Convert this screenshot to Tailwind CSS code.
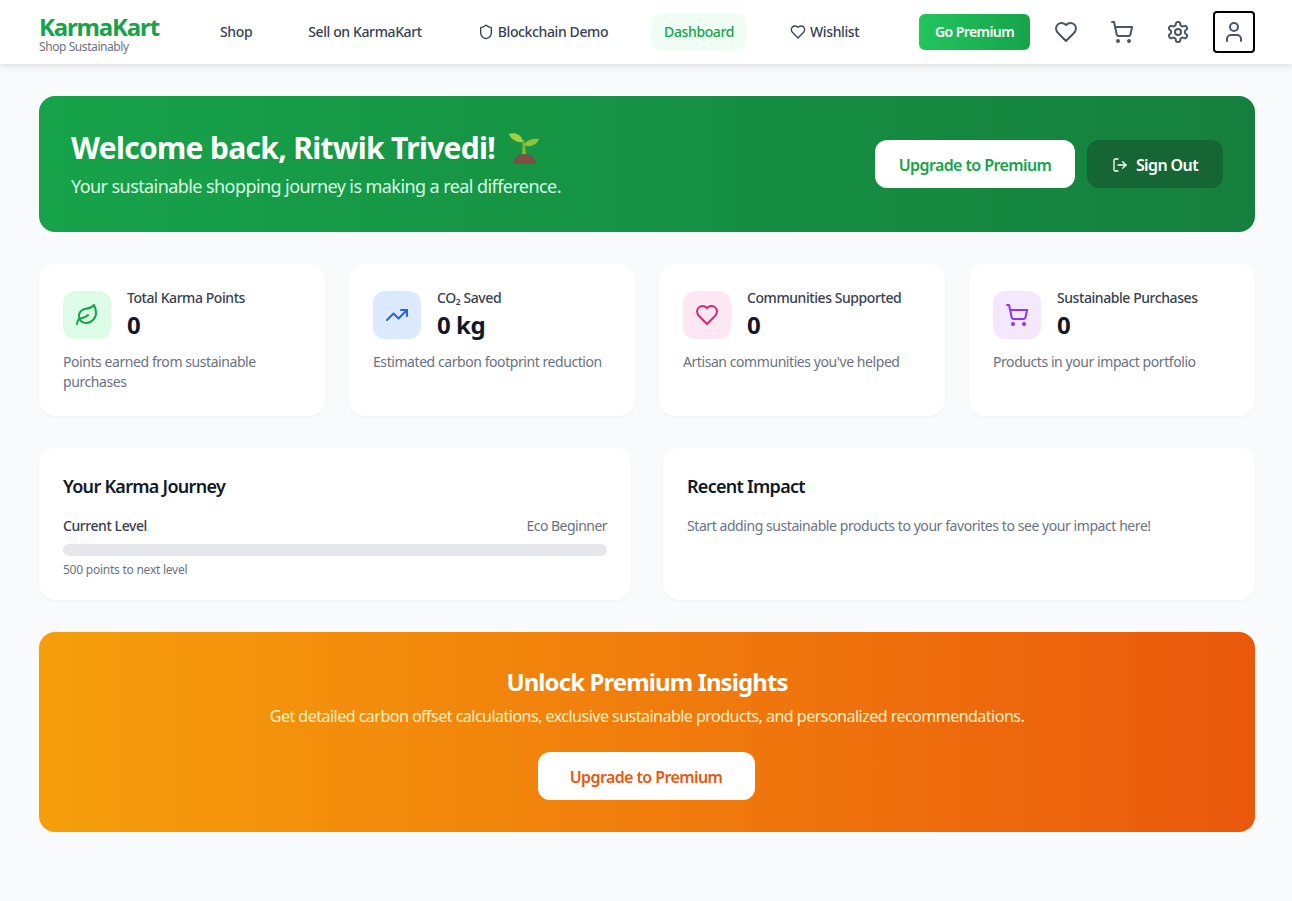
<!DOCTYPE html>
<html lang="en">
<head>
  <meta charset="UTF-8" />
  <meta name="viewport" content="width=device-width, initial-scale=1.0" />
  <title>KarmaKart Dashboard</title>
  <script src="https://cdn.jsdelivr.net/npm/@tailwindcss/browser@4"></script>
</head>
<body class="min-h-screen bg-[#f9fafb] font-['Noto_Sans',sans-serif] tracking-[-0.027em]">

  <!-- Header -->
  <header class="h-16 bg-white shadow-[0_2px_6px_rgba(0,0,0,0.12)]">
    <div class="ml-[39px] flex h-16 w-[1216px] items-center justify-between">
      <div class="flex items-center">
        <div class="w-[169px] pt-1">
          <div class="text-2xl leading-[26px] font-bold tracking-[-0.048em] text-[#16a34a]">KarmaKart</div>
          <div class="text-xs leading-[14px] tracking-[-0.035em] text-[#6b7280]">Shop Sustainably</div>
        </div>
        <nav class="flex items-center gap-8 text-sm font-medium tracking-[-0.0275em] text-[#374151]">
          <a class="flex h-9 items-center px-3">Shop</a>
          <a class="flex h-9 items-center px-3">Sell on KarmaKart</a>
          <a class="flex h-9 items-center gap-1 px-3">
            <svg class="h-4 w-4" viewBox="0 0 24 24" fill="none" stroke="currentColor" stroke-width="2" stroke-linecap="round" stroke-linejoin="round"><path d="M20 13c0 5-3.5 7.5-7.66 8.95a1 1 0 0 1-.67-.01C7.5 20.5 4 18 4 13V6a1 1 0 0 1 1-1c2 0 4.5-1.2 6.24-2.72a1.17 1.17 0 0 1 1.52 0C14.51 3.81 17 5 19 5a1 1 0 0 1 1 1z"/></svg>
            Blockchain Demo
          </a>
          <a class="flex h-9 items-center rounded-lg bg-[#f0fdf4] px-3 text-[#16a34a]">Dashboard</a>
          <a class="flex h-9 items-center gap-1 px-3">
            <svg class="h-4 w-4" viewBox="0 0 24 24" fill="none" stroke="currentColor" stroke-width="2" stroke-linecap="round" stroke-linejoin="round"><path d="M19 14c1.49-1.46 3-3.21 3-5.5A5.5 5.5 0 0 0 16.5 3c-1.76 0-3 .5-4.5 2-1.5-1.5-2.74-2-4.5-2A5.5 5.5 0 0 0 2 8.5c0 2.3 1.5 4.05 3 5.5l7 7Z"/></svg>
            Wishlist
          </a>
        </nav>
      </div>
      <div class="flex items-center gap-4 text-[#4b5563]">
        <button class="flex h-9 w-[111px] items-center justify-center rounded-md bg-gradient-to-r from-[#22c55e] to-[#16a34a] text-sm font-semibold tracking-[-0.04em] text-white">Go Premium</button>
        <button class="flex h-10 w-10 items-center justify-center">
          <svg class="h-6 w-6" viewBox="0 0 24 24" fill="none" stroke="currentColor" stroke-width="2" stroke-linecap="round" stroke-linejoin="round"><path d="M19 14c1.49-1.46 3-3.21 3-5.5A5.5 5.5 0 0 0 16.5 3c-1.76 0-3 .5-4.5 2-1.5-1.5-2.74-2-4.5-2A5.5 5.5 0 0 0 2 8.5c0 2.3 1.5 4.05 3 5.5l7 7Z"/></svg>
        </button>
        <button class="flex h-10 w-10 items-center justify-center">
          <svg class="h-6 w-6" viewBox="0 0 24 24" fill="none" stroke="currentColor" stroke-width="2" stroke-linecap="round" stroke-linejoin="round"><circle cx="8" cy="21" r="1"/><circle cx="19" cy="21" r="1"/><path d="M2.05 2.05h2l2.66 12.42a2 2 0 0 0 2 1.58h9.78a2 2 0 0 0 1.95-1.57l1.65-7.43H5.12"/></svg>
        </button>
        <button class="flex h-10 w-10 items-center justify-center">
          <svg class="h-6 w-6" viewBox="0 0 24 24" fill="none" stroke="currentColor" stroke-width="2" stroke-linecap="round" stroke-linejoin="round"><path d="M12.22 2h-.44a2 2 0 0 0-2 2v.18a2 2 0 0 1-1 1.73l-.43.25a2 2 0 0 1-2 0l-.15-.08a2 2 0 0 0-2.73.73l-.22.38a2 2 0 0 0 .73 2.73l.15.1a2 2 0 0 1 1 1.72v.51a2 2 0 0 1-1 1.74l-.15.09a2 2 0 0 0-.73 2.73l.22.38a2 2 0 0 0 2.73.73l.15-.08a2 2 0 0 1 2 0l.43.25a2 2 0 0 1 1 1.73V20a2 2 0 0 0 2 2h.44a2 2 0 0 0 2-2v-.18a2 2 0 0 1 1-1.73l.43-.25a2 2 0 0 1 2 0l.15.08a2 2 0 0 0 2.73-.73l.22-.39a2 2 0 0 0-.73-2.73l-.15-.08a2 2 0 0 1-1-1.74v-.5a2 2 0 0 1 1-1.74l.15-.09a2 2 0 0 0 .73-2.73l-.22-.38a2 2 0 0 0-2.73-.73l-.15.08a2 2 0 0 1-2 0l-.43-.25a2 2 0 0 1-1-1.73V4a2 2 0 0 0-2-2z"/><circle cx="12" cy="12" r="3"/></svg>
        </button>
        <button class="-ml-px flex h-[42px] w-[42px] items-center justify-center rounded border-2 border-black">
          <svg class="h-6 w-6" viewBox="0 0 24 24" fill="none" stroke="currentColor" stroke-width="2" stroke-linecap="round" stroke-linejoin="round"><path d="M19 21v-2a4 4 0 0 0-4-4H9a4 4 0 0 0-4 4v2"/><circle cx="12" cy="7" r="4"/></svg>
        </button>
      </div>
    </div>
  </header>

  <main class="ml-[39px] flex w-[1216px] flex-col gap-8 pt-8">

    <!-- Welcome banner -->
    <section class="flex h-[136px] items-center justify-between rounded-2xl bg-gradient-to-r from-[#16a34a] to-[#15803d] px-8 text-white">
      <div class="pt-[2px]">
        <h1 class="flex items-center gap-3 text-3xl leading-9 font-bold tracking-[-0.023em]">
          Welcome back, Ritwik Trivedi!
          <svg class="h-8 w-8" viewBox="0 0 32 32"><path d="M2 2c5-2 13 0 14 8C11 11 4 8 2 2Z" fill="#a5cf3f"/><path d="M17 13c2-5 9-7 15-6-2 6-10 9-15 6Z" fill="#8fc43a"/><path d="M15 8h2c1 5 2 10 2 16h-4c0-6 1-11 0-16Z" fill="#7fb83a"/><path d="M6 32c0-6 5-10 11.500-10S29 26 29 32Z" fill="#7d4f45"/></svg>
        </h1>
        <p class="mt-[6px] text-lg leading-7 tracking-[-0.032em] text-[#dcfce7]">Your sustainable shopping journey is making a real difference.</p>
      </div>
      <div class="flex items-center gap-3 tracking-[-0.0375em]">
        <button class="flex h-12 w-[200px] items-center justify-center rounded-xl bg-white pt-[2px] font-semibold text-[#16a34a]">Upgrade to Premium</button>
        <button class="flex h-12 w-[136px] items-center justify-center gap-2 rounded-xl bg-[#166534] pt-[2px] font-semibold">
          <svg class="h-4 w-4" viewBox="0 0 24 24" fill="none" stroke="currentColor" stroke-width="2" stroke-linecap="round" stroke-linejoin="round"><path d="M9 21H5a2 2 0 0 1-2-2V5a2 2 0 0 1 2-2h4"/><polyline points="16 17 21 12 16 7"/><line x1="21" y1="12" x2="9" y2="12"/></svg>
          Sign Out
        </button>
      </div>
    </section>

    <!-- Stat cards -->
    <section class="grid grid-cols-4 gap-6">
      <div class="h-[152px] rounded-2xl bg-white p-6 shadow-[0_1px_3px_rgba(0,0,0,0.04)]">
        <div class="mb-[11px] flex items-center gap-4">
          <div class="flex h-12 w-12 items-center justify-center rounded-xl bg-[#dcfce7] text-[#16a34a]">
            <svg class="h-6 w-6" viewBox="0 0 24 24" fill="none" stroke="currentColor" stroke-width="2" stroke-linecap="round" stroke-linejoin="round"><path d="M11 20A7 7 0 0 1 9.8 6.1C15.5 5 17 4.48 19 2c1 2 2 4.18 2 8 0 5.5-4.78 10-10 10Z"/><path d="M2 21c0-3 1.85-5.36 5.08-6C9.5 14.52 12 13 13 12"/></svg>
          </div>
          <div>
            <div class="text-sm leading-5 font-medium text-[#374151]">Total Karma Points</div>
            <div class="mt-px text-2xl leading-8 font-bold text-[#111827]">0</div>
          </div>
        </div>
        <p class="text-sm leading-5 text-[#6b7280]">Points earned from sustainable purchases</p>
      </div>
      <div class="h-[152px] rounded-2xl bg-white p-6 shadow-[0_1px_3px_rgba(0,0,0,0.04)]">
        <div class="mb-[11px] flex items-center gap-4">
          <div class="flex h-12 w-12 items-center justify-center rounded-xl bg-[#dbeafe] text-[#2563eb]">
            <svg class="h-6 w-6" viewBox="0 0 24 24" fill="none" stroke="currentColor" stroke-width="2" stroke-linecap="round" stroke-linejoin="round"><polyline points="22 7 13.5 15.5 8.5 10.5 2 17"/><polyline points="16 7 22 7 22 13"/></svg>
          </div>
          <div>
            <div class="text-sm leading-5 font-medium text-[#374151]">CO₂ Saved</div>
            <div class="mt-px text-2xl leading-8 font-bold text-[#111827]">0 kg</div>
          </div>
        </div>
        <p class="text-sm leading-5 text-[#6b7280]">Estimated carbon footprint reduction</p>
      </div>
      <div class="h-[152px] rounded-2xl bg-white p-6 shadow-[0_1px_3px_rgba(0,0,0,0.04)]">
        <div class="mb-[11px] flex items-center gap-4">
          <div class="flex h-12 w-12 items-center justify-center rounded-xl bg-[#fce7f3] text-[#db2777]">
            <svg class="h-6 w-6" viewBox="0 0 24 24" fill="none" stroke="currentColor" stroke-width="2" stroke-linecap="round" stroke-linejoin="round"><path d="M19 14c1.49-1.46 3-3.21 3-5.5A5.5 5.5 0 0 0 16.5 3c-1.76 0-3 .5-4.5 2-1.5-1.5-2.74-2-4.5-2A5.5 5.5 0 0 0 2 8.5c0 2.3 1.5 4.05 3 5.5l7 7Z"/></svg>
          </div>
          <div>
            <div class="text-sm leading-5 font-medium text-[#374151]">Communities Supported</div>
            <div class="mt-px text-2xl leading-8 font-bold text-[#111827]">0</div>
          </div>
        </div>
        <p class="text-sm leading-5 text-[#6b7280]">Artisan communities you've helped</p>
      </div>
      <div class="h-[152px] rounded-2xl bg-white p-6 shadow-[0_1px_3px_rgba(0,0,0,0.04)]">
        <div class="mb-[11px] flex items-center gap-4">
          <div class="flex h-12 w-12 items-center justify-center rounded-xl bg-[#f3e8ff] text-[#9333ea]">
            <svg class="h-6 w-6" viewBox="0 0 24 24" fill="none" stroke="currentColor" stroke-width="2" stroke-linecap="round" stroke-linejoin="round"><circle cx="8" cy="21" r="1"/><circle cx="19" cy="21" r="1"/><path d="M2.05 2.05h2l2.66 12.42a2 2 0 0 0 2 1.58h9.78a2 2 0 0 0 1.95-1.57l1.65-7.43H5.12"/></svg>
          </div>
          <div>
            <div class="text-sm leading-5 font-medium text-[#374151]">Sustainable Purchases</div>
            <div class="mt-px text-2xl leading-8 font-bold text-[#111827]">0</div>
          </div>
        </div>
        <p class="text-sm leading-5 text-[#6b7280]">Products in your impact portfolio</p>
      </div>
    </section>

    <!-- Journey and impact -->
    <section class="grid grid-cols-2 gap-8">
      <div class="h-[152px] rounded-2xl bg-white p-6 shadow-[0_1px_3px_rgba(0,0,0,0.04)]">
        <h2 class="mb-4 text-lg leading-7 font-semibold tracking-[-0.04em] text-[#111827]">Your Karma Journey</h2>
        <div class="mb-2 flex justify-between text-sm leading-5">
          <span class="font-medium text-[#374151]">Current Level</span>
          <span class="tracking-[-0.038em] text-[#6b7280]">Eco Beginner</span>
        </div>
        <div class="h-3 rounded-full bg-[#e5e7eb]"></div>
        <p class="mt-[6px] text-xs leading-4 tracking-[-0.02em] text-[#6b7280]">500 points to next level</p>
      </div>
      <div class="h-[152px] rounded-2xl bg-white p-6 shadow-[0_1px_3px_rgba(0,0,0,0.04)]">
        <h2 class="mb-4 text-lg leading-7 font-semibold tracking-[-0.04em] text-[#111827]">Recent Impact</h2>
        <p class="text-sm leading-5 text-[#6b7280]">Start adding sustainable products to your favorites to see your impact here!</p>
      </div>
    </section>

    <!-- Premium banner -->
    <section class="flex h-[200px] flex-col items-center rounded-2xl bg-gradient-to-r from-[#f59e0b] to-[#ea580c] pt-[34px] text-white">
      <h2 class="text-2xl leading-8 font-bold tracking-[-0.038em]">Unlock Premium Insights</h2>
      <p class="mt-[6px] leading-6 tracking-[-0.032em] text-[#fef3c7]">Get detailed carbon offset calculations, exclusive sustainable products, and personalized recommendations.</p>
      <button class="mt-6 mr-[2px] flex h-12 w-[217px] items-center justify-center rounded-xl bg-white pt-[2px] font-semibold tracking-[-0.0375em] text-[#ea580c]">Upgrade to Premium</button>
    </section>
  </main>
</body>
</html>
